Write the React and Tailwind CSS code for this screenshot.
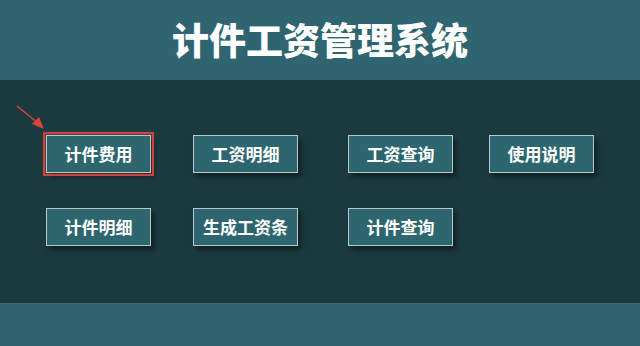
import React from 'react';

const rows = [
  ['计件费用', '工资明细', '工资查询', '使用说明'],
  ['计件明细', '生成工资条', '计件查询'],
];

const font = { fontFamily: '"Noto Sans CJK SC", "Noto Sans", sans-serif' };

const MenuButton = ({ label, active }) => (
  <div
    className={
      active
        ? 'w-fit outline-2 outline-[#c8463d] outline-offset-1 shadow-[0_0_3px_2px_rgba(200,70,61,0.5)]'
        : 'w-fit'
    }
  >
    <button
      className="w-[105px] h-[38px] bg-[#2d666f] border border-[#b9c9ca] text-white font-bold text-[17px] shadow-[3px_4px_5px_rgba(0,0,0,0.45)] flex items-center justify-center"
      style={font}
    >
      {label}
    </button>
  </div>
);

export default function App() {
  return (
    <div className="w-[640px] h-[346px] flex flex-col overflow-hidden" style={font}>
      {/* Header */}
      <div className="h-[80px] bg-[#2e6570] flex items-center justify-center">
        <h1 className="text-white font-black text-[37px] leading-none mb-[2px]">
          计件工资管理系统
        </h1>
      </div>

      {/* Menu area */}
      <div className="relative flex-1 bg-[#1b3a40] pt-[55px] pl-[46px] flex flex-col gap-[35px]">
        {/* pointer arrow */}
        <svg className="absolute left-[14px] top-[23px]" width="34" height="30" viewBox="0 0 34 30">
          <line x1="3" y1="3" x2="24" y2="20" stroke="#d9443a" strokeWidth="1.6" />
          <polygon points="30,26 18,21 25,14" fill="#d9443a" />
        </svg>
        {rows.map((row, ri) => (
          <div key={ri} className="grid grid-cols-[147px_155px_141px_105px]">
            {row.map((label, i) => (
              <MenuButton key={label} label={label} active={ri === 0 && i === 0} />
            ))}
          </div>
        ))}
      </div>

      {/* Footer band */}
      <div className="h-[43px] bg-[#2e6570] border-t border-[#3f6f76]" />
    </div>
  );
}
